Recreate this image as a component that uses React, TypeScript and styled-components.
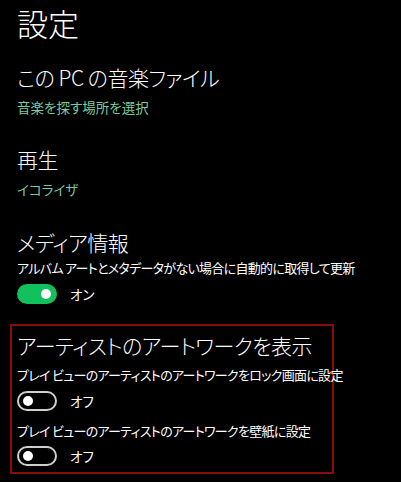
import React from "react"
import styled, { createGlobalStyle } from "styled-components"

const Global = createGlobalStyle`
  html, body {
    margin: 0;
    padding: 0;
    background: #000;
  }
  body {
    font-family: "Noto Sans CJK JP", "Noto Sans", sans-serif;
    font-feature-settings: "palt";
    color: #fff;
  }
`

const S = {
  Page: styled.div`
    width: 401px;
    height: 482px;
    padding-left: 17px;
    box-sizing: border-box;
    overflow: hidden;
    background: #000;
  `,
  Title: styled.h1`
    margin: 0;
    font-size: 31px;
    font-weight: 300;
    line-height: 45px;
  `,
  Section: styled.section<{ $top: number; $framed?: boolean }>`
    margin-top: ${(p) => p.$top}px;
    display: flex;
    flex-direction: column;
    ${(p) =>
      p.$framed &&
      `
      width: 324px;
      box-sizing: border-box;
      margin-left: -7px;
      padding: 4px 0 6px 5px;
      border: 2px solid #8b0b0b;
    `}
  `,
  Heading: styled.h2`
    margin: 0;
    font-size: 21px;
    font-weight: 300;
    letter-spacing: -0.5px;
    line-height: 30px;
    white-space: nowrap;
  `,
  Link: styled.a`
    margin-top: 5px;
    font-size: 13.5px;
    line-height: 20px;
    color: #7ccaa0;
    text-decoration: none;
    cursor: pointer;
  `,
  Description: styled.div<{ $top: number }>`
    margin-top: ${(p) => p.$top}px;
    font-size: 13px;
    letter-spacing: -0.7px;
    line-height: 20px;
    white-space: nowrap;
  `,
  ToggleRow: styled.label<{ $top: number }>`
    margin-top: ${(p) => p.$top}px;
    display: flex;
    align-items: center;
    gap: 13px;
    height: 20px;
    font-size: 13.5px;
  `,
  Track: styled.span<{ $on: boolean }>`
    width: 40px;
    height: 20px;
    box-sizing: border-box;
    border-radius: 10px;
    display: flex;
    align-items: center;
    padding: 0 4px;
    justify-content: ${(p) => (p.$on ? "flex-end" : "flex-start")};
    background: ${(p) => (p.$on ? "#12c15d" : "transparent")};
    border: 2px solid ${(p) => (p.$on ? "#12c15d" : "#cfcfcf")};
  `,
  Knob: styled.span`
    width: 10px;
    height: 10px;
    border-radius: 50%;
    background: #fff;
  `,
}

const Toggle: React.FC<{ on: boolean; top: number }> = ({ on, top }) => (
  <S.ToggleRow $top={top}>
    <S.Track $on={on}>
      <S.Knob />
    </S.Track>
    <span>{on ? "オン" : "オフ"}</span>
  </S.ToggleRow>
)

const App: React.FC = () => {
  return (
    <S.Page>
      <Global />
      <S.Title>設定</S.Title>

      <S.Section $top={17}>
        <S.Heading>この PC の音楽ファイル</S.Heading>
        <S.Link>音楽を探す場所を選択</S.Link>
      </S.Section>

      <S.Section $top={27}>
        <S.Heading>再生</S.Heading>
        <S.Link>イコライザ</S.Link>
      </S.Section>

      <S.Section $top={28}>
        <S.Heading>メディア情報</S.Heading>
        <S.Description $top={1}>
          アルバム アートとメタデータがない場合に自動的に取得して更新
        </S.Description>
        <Toggle on top={6} />
      </S.Section>

      <S.Section $top={20} $framed>
        <S.Heading>アーティストのアートワークを表示</S.Heading>
        <S.Description $top={5}>
          プレイ ビューのアーティストのアートワークをロック画面に設定
        </S.Description>
        <Toggle on={false} top={6} />
        <S.Description $top={10}>
          プレイ ビューのアーティストのアートワークを壁紙に設定
        </S.Description>
        <Toggle on={false} top={5} />
      </S.Section>
    </S.Page>
  )
}

export default App
